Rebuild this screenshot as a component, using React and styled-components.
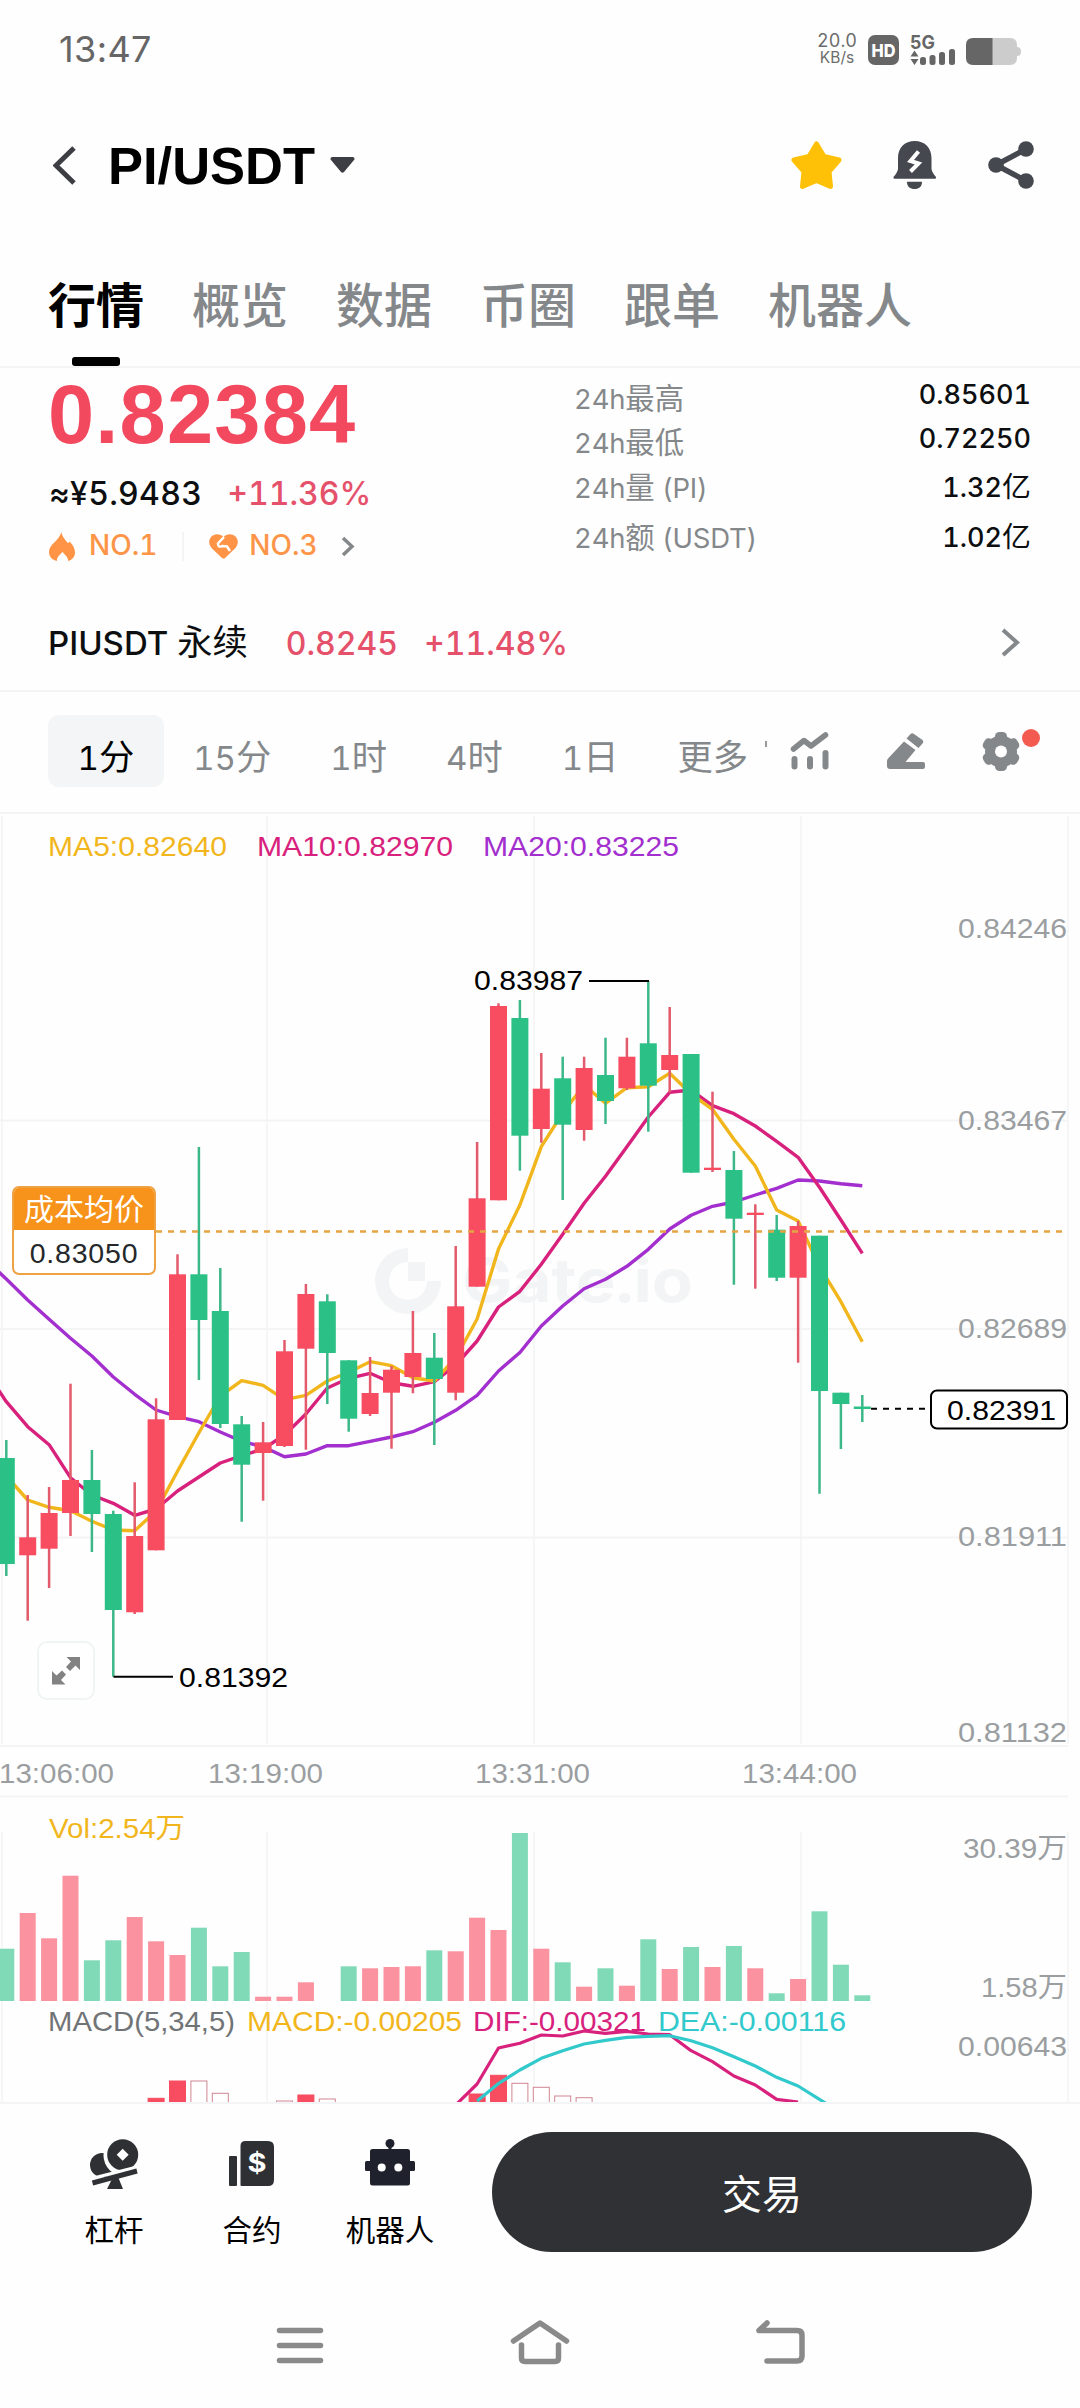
import React, { Fragment } from 'react'
import styled, { createGlobalStyle } from 'styled-components'

const UP = '#f84c60'
const DOWN = '#2bc186'
const INK = '#0c0e10'
const MUTED = '#85888b'
const AXIS = '#9b9ea1'
const LINE = '#f3f4f5'
const YELLOW = '#f2b61d'
const PINK = '#d8217c'
const PURPLE = '#a22fce'
const CYAN = '#31c9cb'
const FONT = 'Inter, "Noto Sans CJK SC", sans-serif'
const NUMERIC = '"Liberation Sans", "Noto Sans CJK SC", sans-serif'

const GlobalStyle = createGlobalStyle`
  body {
    margin: 0;
    background: #fefefe;
    font-family: ${FONT};
    font-variant-numeric: tabular-nums;
    color: ${INK};
  }
`

const Screen = styled.div`
  width: 1080px;
  height: 2408px;
  display: flex;
  flex-direction: column;
  overflow: hidden;
  white-space: nowrap;
`

const Label = styled.span`
  font-size: ${props => props.$size}px;
  line-height: 1.2;
  font-weight: ${props => props.$weight || 400};
  letter-spacing: ${props => props.$track || 0}px;
  color: ${props => props.$color || INK};
`

// Han glyphs are set slightly larger than the latin text beside them
const Han = styled.span`
  font-size: 1.07em;
  font-weight: 400;
  line-height: 0;
  letter-spacing: 0;
`

/* status bar */

const StatusBar = styled.div`
  height: 98px;
  display: flex;
  justify-content: space-between;
  align-items: center;
  padding: 0 56px 0 59px;
  box-sizing: border-box;
`

const Clock = styled.span`
  font-size: 36px;
  font-variant-numeric: normal;
  letter-spacing: 0.4px;
  color: #666;
`

const StatusIcons = styled.div`
  display: flex;
  align-items: center;
  padding: 0 3px 3px 0;
`

const NetSpeed = styled.div`
  display: flex;
  flex-direction: column;
  align-items: center;
  width: 38px;
  margin: 3px 12px 0 0;
  font-size: 18px;
  line-height: 17px;
  color: #6c6c6c;

  span:last-child {
    font-size: 15.5px;
  }
`

/* header */

const Header = styled.div`
  height: 136px;
  display: flex;
  align-items: center;
  padding: 0 46px 2px 53px;
  box-sizing: border-box;
`

const Title = styled.h1`
  margin: 0 15px 0 31px;
  font-family: ${NUMERIC};
  font-size: 52.5px;
  font-weight: 700;
  color: #000;
`

const HeaderIcons = styled.div`
  display: flex;
  gap: 51px;
  margin-left: auto;
`

const Tabs = styled.div`
  height: 134px;
  display: flex;
  gap: 48px;
  padding: 0 48px;
  box-sizing: border-box;
  border-bottom: 2px solid ${LINE};
`

const Tab = styled.div`
  display: flex;
  flex-direction: column;
  align-items: center;
  justify-content: flex-end;
  font-size: 48px;
  line-height: 70px;
  font-weight: ${props => props.$active ? 700 : 500};
  color: ${props => props.$active ? '#000' : MUTED};

  &::after {
    content: '';
    width: 48px;
    height: 9px;
    margin-top: 16px;
    border-radius: 3px;
    background: ${props => props.$active ? '#000' : 'transparent'};
  }
`

/* ticker */

const Ticker = styled.div`
  height: 230px;
  display: flex;
  justify-content: space-between;
  padding: 0 49px 0 49px;
  box-sizing: border-box;
`

const Price = styled.div`
  height: 91px;
  margin-left: -1px;
  line-height: 94px;
  font-family: ${NUMERIC};
  font-size: 83px;
  font-weight: 700;
  letter-spacing: 1.2px;
  color: #f2495f;
`

const PriceSub = styled.div`
  height: 70px;
  display: flex;
  align-items: center;
  gap: 25px;
`

const Ranks = styled.div`
  height: 34px;
  display: flex;
  align-items: center;
`

const Divider = styled.i`
  width: 2px;
  height: 29px;
  margin: 0 25px 0 25px;
  background: ${LINE};
`

const Stats = styled.div`
  width: 457px;
  padding-top: 9px;
  display: grid;
  grid-template-rows: 44px 44px 46px 54px;
`

const Stat = styled.div`
  display: flex;
  justify-content: space-between;
  align-items: center;
`

const StatValue = styled(Label)`
  padding-bottom: ${props => props.$raised ? 7 : 0}px;
`

const Perp = styled.div`
  height: 94px;
  display: flex;
  align-items: center;
  padding: 0 60px 0 48px;
  box-sizing: border-box;
  border-bottom: 2px solid ${LINE};

  svg {
    margin: 0 0 3px auto;
  }
`

/* interval bar */

const Toolbar = styled.div`
  height: 122px;
  display: flex;
  align-items: center;
  padding: 0 40px 2px 48px;
  box-sizing: border-box;
  border-bottom: 2px solid ${LINE};
`

const Interval = styled.div`
  height: 72px;
  padding: 10px ${props => props.$last ? 17 : 29.5}px 0 29.5px;
  box-sizing: border-box;
  line-height: 66px;
  border-radius: 11px;
  font-size: 33px;
  color: ${props => props.$active ? '#000' : MUTED};
  background: ${props => props.$active ? '#f3f5f6' : 'transparent'};
`

const Tick = styled.i`
  width: 2px;
  height: 6px;
  margin-bottom: 14px;
  background: #999;
`

const Tools = styled.div`
  display: flex;
  align-items: center;
  margin-left: auto;
  gap: 57px;
`

const ToolWithDot = styled.div`
  position: relative;
  display: flex;
  padding-right: 20px;
`

const Dot = styled.i`
  position: absolute;
  top: -3px;
  right: 0;
  width: 18px;
  height: 18px;
  border-radius: 50%;
  background: #f35b50;
`

/* chart */

const ChartArea = styled.div`
  position: relative;
  height: 1288px;

  > svg {
    display: block;
  }
`

const ExpandButton = styled.button`
  position: absolute;
  left: 37px;
  top: 827px;
  width: 58px;
  height: 59px;
  padding: 0;
  display: flex;
  align-items: center;
  justify-content: center;
  border: 2px solid #f1f4f5;
  border-radius: 10px;
  background: #fff;
`

const CostTag = styled.div`
  position: absolute;
  left: 12px;
  top: 372px;
  width: 144px;
  height: 89px;
  box-sizing: border-box;
  border: 2px solid #efa244;
  border-radius: 7px;
  background: #fff;
  overflow: hidden;
  text-align: center;
`

const CostHead = styled.div`
  height: 42px;
  line-height: 42px;
  background: #f7931a;
  color: #fff;
  font-size: 30px;
`

const CostValue = styled.div`
  line-height: 47px;
  font-family: ${NUMERIC};
  font-size: 28.5px;
  letter-spacing: 0.8px;
  color: #25282b;
`

/* footer */

const Footer = styled.div`
  height: 188px;
  display: flex;
  padding: 28px 48px 0 45px;
  box-sizing: border-box;
  border-top: 2px solid ${LINE};
`

const Action = styled.div`
  width: 138px;
  display: flex;
  flex-direction: column;
  align-items: center;
  padding-top: 7px;
  box-sizing: border-box;
  font-size: 29.5px;
  line-height: 44px;
  color: #000;

  svg {
    height: 52px;
    margin-bottom: 17px;
  }
`

const TradeButton = styled.button`
  width: 540px;
  height: 120px;
  margin-left: auto;
  padding: 0;
  border: 0;
  border-radius: 60px;
  background: #303134;
  color: #fff;
  font: 400 40px ${FONT};
`

const NavBar = styled.div`
  height: 118px;
  display: flex;
  justify-content: center;
  gap: 180px;
  padding-top: 28px;
  box-sizing: border-box;
`

// [rising, high, top, bottom, low, volume top] in chart pixels
const CANDLES = [
  [0, 1440, 1458, 1564, 1576, 1948.7],
  [1, 1495, 1537.3, 1555.3, 1620.7, 1913],
  [1, 1487, 1513, 1548.7, 1588, 1938.3],
  [1, 1383.7, 1480, 1513, 1536, 1875.7],
  [0, 1450, 1480, 1514, 1552, 1960.3],
  [0, 1510.7, 1514, 1610, 1676.7, 1940.3],
  [1, 1482.3, 1536, 1612.3, 1614, 1917],
  [1, 1398.3, 1419.3, 1550.3, 1550.3, 1941.3],
  [1, 1254.3, 1274.3, 1420, 1420, 1955],
  [0, 1147, 1274.3, 1320, 1380, 1927.7],
  [0, 1268, 1311, 1424, 1428, 1966.3],
  [0, 1416, 1424.3, 1464.7, 1521.7, 1952],
  [1, 1422, 1442.3, 1453, 1500.7, 1996.7],
  [1, 1340, 1351.3, 1446, 1447, 1996.7],
  [1, 1284, 1294, 1348.7, 1449.7, 1982.3],
  [0, 1294.3, 1301.3, 1353, 1404, 2001],
  [0, 1360.3, 1360.3, 1418.7, 1431.7, 1966.3],
  [1, 1357, 1393, 1414, 1416, 1968.3],
  [1, 1366, 1369.7, 1392.7, 1448.7, 1967],
  [1, 1311, 1353, 1377, 1393.3, 1966.3],
  [0, 1333, 1357.7, 1379, 1445, 1950.3],
  [1, 1246, 1306.3, 1392.7, 1400.3, 1951.3],
  [1, 1142, 1198.3, 1286.7, 1286.7, 1917.7],
  [1, 1003.3, 1006, 1200.3, 1200.3, 1930],
  [0, 1000, 1018, 1135.7, 1170.7, 1833],
  [1, 1053, 1088.7, 1129, 1142.7, 1948.7],
  [0, 1056.7, 1078.3, 1124.7, 1200, 1962.3],
  [1, 1056.7, 1068, 1130, 1140.7, 1986.7],
  [0, 1037.7, 1075, 1101, 1124, 1968.3],
  [1, 1037.7, 1056.7, 1088.3, 1090, 1985.7],
  [0, 981, 1043.3, 1085.7, 1131.7, 1939.3],
  [1, 1007, 1055, 1070, 1092.7, 1969],
  [0, 1054, 1054, 1172.7, 1172.7, 1947],
  [1, 1091.7, 1167.7, 1170, 1172, 1967],
  [0, 1151, 1170, 1218.7, 1284.7, 1946],
  [1, 1204.3, 1212.7, 1215, 1288.7, 1968.3],
  [0, 1215, 1229.7, 1277.7, 1281, 1993.3],
  [1, 1221, 1226, 1277.7, 1362.7, 1979],
  [0, 1235.7, 1235.7, 1391, 1493.7, 1911.3],
  [0, 1392.7, 1392.7, 1404, 1449, 1964.7],
  [0, 1395, 1406.5, 1409, 1422, 1995.3],
]

const MA5 = [
  1476, 1500, 1507.3, 1510.7, 1521.3, 1530, 1530.7, 1511, 1471.3, 1432.7, 1396, 1380.7, 1385.3, 1399.7,
  1395.3, 1381, 1372.3, 1361.7, 1365.7, 1377.7, 1381, 1358, 1319, 1249, 1205, 1146.7, 1113, 1085, 1103.3,
  1087.7, 1086.7, 1073.3, 1094, 1109.3, 1139.3, 1166, 1210, 1221, 1266.5, 1301.7, 1341.7,
]

const MA10 = [
  1401.7, 1426.7, 1444.7, 1477.7, 1495, 1503.3, 1515.3, 1509, 1491, 1477, 1463, 1455.7, 1449, 1435,
  1414, 1388, 1378.3, 1373.3, 1382.7, 1386.3, 1381.7, 1365, 1341, 1307, 1291.3, 1264.3, 1234.3, 1203.3,
  1176.3, 1146.7, 1117, 1092.3, 1090, 1105.7, 1113.7, 1126, 1141.3, 1157.3, 1187.3, 1220, 1253.3,
]

const MA20 = [
  1279, 1300, 1319.3, 1338.3, 1356, 1377, 1394.3, 1410, 1416.7, 1421.7, 1432, 1441.3, 1446.7, 1456.7,
  1454, 1445.7, 1445.7, 1441.3, 1437, 1431.7, 1422.3, 1410.3, 1395.3, 1371, 1352.5, 1326, 1306, 1288.7,
  1279.3, 1266.3, 1249.3, 1229, 1215.3, 1206.3, 1202, 1195, 1188.3, 1180, 1181, 1183.7, 1185.7,
]

const DIF = [
  2105, 2084, 2048, 2043.3, 2035, 2036, 2031, 2033.3, 2031.3, 2034, 2034.7, 2050.7, 2061.7, 2076,
  2085, 2099.3, 2102,
]

const DEA = [
  2101, 2083.5, 2070, 2058.3, 2050.7, 2044, 2040.3, 2037.3, 2036.3, 2035.7, 2040.7, 2047.7, 2056.7,
  2066, 2077.3, 2086, 2099.3, 2113,
]

// [candle index, top, filled]
const MACD_BARS = [
  [7, 2098.3, 1], [8, 2081, 1], [9, 2081, 0], [10, 2093.3, 0], [13, 2101, 0], [14, 2095, 1],
  [15, 2099, 0], [22, 2094, 1], [23, 2075.3, 1], [24, 2083.3, 0], [25, 2087.3, 0], [26, 2096, 0],
  [27, 2097.7, 0],
]

// [text, x, baseline, width, colour]
const CHART_TEXT = [
  ['MA5:0.82640', 48, 856, 179, YELLOW],
  ['MA10:0.82970', 257, 856, 196, PINK],
  ['MA20:0.83225', 483, 856, 196, PURPLE],
  ['0.84246', 958, 937.5, 109, AXIS],
  ['0.83467', 958, 1129.5, 109, AXIS],
  ['0.82689', 958, 1337.5, 109, AXIS],
  ['0.81911', 958, 1546, 109, AXIS],
  ['0.81132', 958, 1742, 109, AXIS],
  ['13:06:00', -1, 1783, 115, AXIS],
  ['13:19:00', 208, 1783, 115, AXIS],
  ['13:31:00', 475, 1783, 115, AXIS],
  ['13:44:00', 742, 1783, 115, AXIS],
  ['Vol:2.54万', 49, 1838, 136, YELLOW],
  ['30.39万', 963, 1858, 104, AXIS],
  ['1.58万', 981, 1997, 86, AXIS],
  ['0.00643', 958, 2056, 109, AXIS],
  ['MACD(5,34,5)', 48, 2031, 187, '#717476'],
  ['MACD:-0.00205', 247, 2031, 215, YELLOW],
  ['DIF:-0.00321', 473, 2031, 173, PINK],
  ['DEA:-0.00116', 658, 2031, 188, CYAN],
  ['0.83987', 474, 990, 109, '#000'],
  ['0.81392', 179, 1687, 109, '#000'],
  ['0.82391', 947, 1420, 109, '#000'],
]

const cx = i => 6.3 + 21.4 * i
const points = (values, start = 0) => values.map((y, i) => `${cx(i + start)},${y}`).join(' ')

const MarketChart = () => (
  <svg width="1080" height="1288" viewBox="0 814 1080 1288" fontFamily={NUMERIC}>
    <g stroke={LINE} strokeWidth="2">
      {[2, 267, 534, 801, 1068].map(x => (
        <path key={x} d={`M${x} 816V1744M${x} 1832V2102`} strokeWidth="1.5" />
      ))}
      <path d="M0 1120.5H1068M0 1329H1068M0 1537.5H1068M0 1746H1068M0 1796.5H1068" />
    </g>

    <g fill="#f2f4f5">
      <path d="M408 1248A33 33 0 1 0 441 1281H427A19 19 0 1 1 408 1262Z" />
      <path d="M408 1262h17v19h-17z" />
      <text
        x="462"
        y="1302"
        fontFamily="Inter"
        fontSize="60"
        fontWeight="700"
        textLength="231"
        lengthAdjust="spacingAndGlyphs"
      >
        Gate.io
      </text>
    </g>

    <g fill="none" strokeWidth="3.4" strokeLinejoin="round">
      <polyline points={`-15,1259 ${points(MA20)}`} stroke={PURPLE} />
      <polyline points={`-15,1370 ${points(MA10)}`} stroke={PINK} />
      <polyline points={points(MA5)} stroke={YELLOW} />
    </g>

    {CANDLES.map(([rising, high, top, bottom, low, vol], i) => (
      <Fragment key={i}>
        <path d={`M${cx(i)} ${high}V${low}`} stroke={rising ? '#e25a6b' : '#3cb788'} strokeWidth="2.5" />
        <rect x={cx(i) - 8.5} y={top} width="17" height={bottom - top} fill={rising ? UP : DOWN} />
        <rect x={cx(i) - 8} y={vol} width="16" height={2001 - vol} fill={rising ? '#fa929f' : '#81dab7'} />
      </Fragment>
    ))}

    <path d="M156 1231.500H1064" stroke="#e5a544" strokeWidth="2.4" strokeDasharray="6 6" />
    <path d="M589 981H649M113.5 1676.7H173" stroke="#000" strokeWidth="2" />

    <path d="M871 1408.7H929" stroke="#000" strokeWidth="2" strokeDasharray="6 6" />
    <rect x="931" y="1390.5" width="136" height="38" rx="6" fill="#fff" stroke="#000" strokeWidth="2" />

    {MACD_BARS.map(([i, top, filled]) => (
      <rect
        key={i}
        x={cx(i) - 8}
        y={top}
        width="16"
        height="30"
        fill={filled ? UP : '#fff'}
        stroke={filled ? UP : '#cf8591'}
        strokeWidth="1"
      />
    ))}
    <g fill="none" strokeWidth="3.2" strokeLinejoin="round">
      <polyline points={points(DIF, 21)} stroke={PINK} />
      <polyline points={points(DEA, 22)} stroke={CYAN} />
    </g>

    {CHART_TEXT.map(([text, x, y, width, fill]) => (
      <text key={text} x={x} y={y} fontSize="28" textLength={width} lengthAdjust="spacingAndGlyphs" fill={fill}>
        {text}
      </text>
    ))}
  </svg>
)

/* icons */

const Chevron = ({ width, height, left, color = MUTED, stroke = 3.5 }) => (
  <svg width={width} height={height} viewBox={`0 0 ${width} ${height}`}>
    <path
      d={left
        ? `M${width - 3} 2L3 ${height / 2}L${width - 3} ${height - 2}`
        : `M3 2L${width - 3} ${height / 2}L3 ${height - 2}`}
      fill="none"
      stroke={color}
      strokeWidth={stroke}
    />
  </svg>
)

const StatusGlyphs = () => (
  <svg width="153" height="34" viewBox="0 -4 153 34">
    <rect width="31" height="30" rx="7" fill="#666" />
    <text x="3.5" y="21.5" fontFamily="Inter" fontSize="18" fontWeight="800" fill="#fff" textLength="24" lengthAdjust="spacingAndGlyphs">HD</text>
    <text x="42" y="14" fontFamily="Inter" fontSize="19" fontWeight="700" fill="#666" textLength="25" lengthAdjust="spacingAndGlyphs">5G</text>
    <path d="M42.5 21.5L46.5 15.5L50.5 21.5ZM42.5 24L46.5 30L50.5 24Z" fill="#666" />
    <g fill="#666">
      <rect x="52" y="22" width="6" height="8" rx="2.5" />
      <rect x="61.5" y="20" width="6" height="10" rx="2.5" />
      <rect x="71" y="17" width="6" height="13" rx="2.5" />
      <rect x="81" y="14" width="6" height="16" rx="2.5" />
    </g>
    <path d="M124 3H142Q149 3 149 10V12Q153 12 153 16.5T149 21V23Q149 30 142 30H124Z" fill="#ccc" />
    <path d="M124.500 3H105Q98 3 98 10V23Q98 30 105 30H124.500Z" fill="#666" />
  </svg>
)

const StarIcon = () => (
  <svg width="51" height="48" viewBox="0 0 51 48">
    <path
      d="M25.500 3L33 15.500L48 19L38 30.500L39.500 45.500L25.500 39.500L11.500 45.500L13 30.500L3 19L18 15.500Z"
      fill="#ffc107"
      stroke="#ffc107"
      strokeWidth="5"
      strokeLinejoin="round"
    />
  </svg>
)

const BellIcon = () => (
  <svg width="44" height="48" viewBox="0 0 44 48" fill="#464850">
    <path d="M5 17C5 6.500 12 0 21.700 0S38.500 6.500 38.500 17V28Q39 31.500 43 36Q43.500 37.700 42 37.700H1.500Q0 37.700 .5 36Q4.500 31.500 5 28Z" />
    <path d="M14 40.700H29C29 45.500 26 48 21.500 48S14 45.500 14 40.700Z" />
    <path d="M25.500 10.500L17.500 20L25.500 22.500L17.500 30.500" fill="none" stroke="#fff" strokeWidth="4" />
  </svg>
)

const ShareIcon = () => (
  <svg width="46" height="48" viewBox="0 0 46 48" fill="#464850">
    <path d="M38 8L8 24L38 40" fill="none" stroke="#464850" strokeWidth="5.500" />
    <circle cx="38" cy="8" r="7.800" />
    <circle cx="8" cy="24" r="7.800" />
    <circle cx="38" cy="40" r="7.800" />
  </svg>
)

const FlameIcon = () => (
  <svg width="26" height="29" viewBox="0 0 26 29">
    <path
      d="M12.500 0C13 5 16 7 18 10C19 11.500 20 11 20.500 9.500C24 12.500 26 17 26 20.500C26 25 23 28 19 29C19.500 25.500 16 23 13.500 20C10.500 23 7.500 25.500 8 29C3 28 0 24.500 0 20C0 12 10 9 12.500 0Z"
      fill="#ff9446"
    />
  </svg>
)

const HeartIcon = () => (
  <svg width="29" height="25" viewBox="0 0 29 25">
    <path
      d="M14.500 3C18 -1 24 -.5 27 3C30 7 29 11 26 14.500L16 24Q14.500 25 13 24L3 14.500C0 11 -1 7 2 3C5 -.5 11 -1 14.500 3Z"
      fill="#ff9446"
    />
    <path d="M15 3L9 9.500Q9 14 13.500 12L18 12.500L21 17" fill="none" stroke="#fff" strokeWidth="2.500" />
  </svg>
)

const IndicatorIcon = () => (
  <svg width="40" height="38" viewBox="0 0 40 38" fill="none" stroke={MUTED} strokeWidth="6" strokeLinecap="round">
    <path d="M3.500 17L14 8.500L21 14L35.500 3" strokeWidth="5.500" strokeLinejoin="round" />
    <path d="M4.500 27V34.500M20 27V34.500M35.500 21V34.500" />
  </svg>
)

const PencilIcon = () => (
  <svg width="38" height="36" viewBox="0 0 38 36" fill={MUTED}>
    <path d="M17 8.500L28.500 17L18.500 29H36Q38 29 38 31V34Q38 36 36 36H3Q0 36 0 33V28Q0 26.500 1 25.500Z" />
    <path d="M19.500 5.500L23.500 1Q25 -.5 27 1L35.500 7Q37 8.500 35.500 10.500L31.500 15Z" />
  </svg>
)

const GearIcon = () => (
  <svg width="38" height="39" viewBox="-19 -19.500 38 39" fill={MUTED}>
    <circle r="16" />
    {[0, 60, 120].map(a => (
      <rect key={a} x="-6" y="-19.500" width="12" height="39" rx="4.500" transform={`rotate(${a})`} />
    ))}
    <circle r="6" fill="#fff" />
  </svg>
)

const ExpandIcon = () => (
  <svg width="28" height="29" viewBox="0 0 28 29" fill="#828282">
    <path d="M14.500 1H28V14L23.500 9.500L18 15L14 11L19 5.500Z" />
    <path d="M0 15L4.500 19.500L10 14.500L14 18.500L9 24L13.500 28.500H0Z" />
  </svg>
)

const LeverageIcon = () => (
  <svg width="49" height="52" viewBox="0 0 49 52" fill="#2e3033">
    <circle cx="12" cy="26" r="12" />
    <circle cx="34" cy="16.500" r="20.500" fill="#fefefe" />
    <circle cx="32.700" cy="15.700" r="15.500" />
    <path d="M32.700 9.700L38.700 15.700L32.700 21.700L26.700 15.700Z" fill="#fff" />
    <path d="M1.500 39.500L47 28" stroke="#fefefe" strokeWidth="3" />
    <path d="M2.500 44L47 32" stroke="#2e3033" strokeWidth="5" />
    <path d="M21.500 41L28.500 39L33 50H17Z" />
  </svg>
)

const ContractIcon = () => (
  <svg width="46" height="52" viewBox="0 0 46 52" fill="#2e3033">
    <rect y="17" width="8" height="30" rx="1" />
    <path d="M11.500 7Q11.500 2 16.500 2H39Q45 2 45 8V41Q45 47 39 47H12.500Q11.500 47 11.500 46Z" />
    <text x="18.500" y="33" fontFamily="Inter" fontSize="26" fontWeight="700" fill="#fff" textLength="19" lengthAdjust="spacingAndGlyphs">$</text>
  </svg>
)

const RobotIcon = () => (
  <svg width="50" height="52" viewBox="0 0 50 52" fill="#1f222d">
    <circle cx="25" cy="4.500" r="4.500" />
    <path d="M23.500 6h3v6h-3z" />
    <rect x="5" y="10" width="40" height="36.500" rx="2.500" />
    <rect y="22" width="50" height="10" rx="1.500" />
    <circle cx="16.700" cy="28.500" r="4" fill="#fff" />
    <circle cx="33.300" cy="28.500" r="4" fill="#fff" />
  </svg>
)

const NavIcon = ({ d }) => (
  <svg width="60" height="50" viewBox="0 0 60 50">
    <path d={d} fill="none" stroke="#8a8a8a" strokeWidth="5.500" strokeLinecap="round" strokeLinejoin="round" />
  </svg>
)

const TABS = ['行情', '概览', '数据', '币圈', '跟单', '机器人']

const INTERVALS = [['1', '分'], ['15', '分'], ['1', '时'], ['4', '时'], ['1', '日'], ['', '更多']]

const STATS = [
  ['24h', '最高', '', '0.85601', ''],
  ['24h', '最低', '', '0.72250', ''],
  ['24h', '量', ' (PI)', '1.32', '亿'],
  ['24h', '额', ' (USDT)', '1.02', '亿'],
]

const App = () => (
  <Screen>
    <GlobalStyle />
    <StatusBar>
      <Clock>13:47</Clock>
      <StatusIcons>
        <NetSpeed>
          <span>20.0</span>
          <span>KB/s</span>
        </NetSpeed>
        <StatusGlyphs />
      </StatusIcons>
    </StatusBar>

    <Header>
      <Chevron left width={24} height={39} color="#3c3e44" stroke={5} />
      <Title>PI/USDT</Title>
      <svg width="25" height="16" viewBox="0 0 25 16">
        <path d="M2 0H23Q25.500 1 24 3L14 15Q12.500 16.500 11 15L1 3Q-.5 1 2 0Z" fill="#3c3e44" />
      </svg>
      <HeaderIcons>
        <StarIcon />
        <BellIcon />
        <ShareIcon />
      </HeaderIcons>
    </Header>

    <Tabs>
      {TABS.map((tab, i) => <Tab key={tab} $active={i === 0}>{tab}</Tab>)}
    </Tabs>

    <Ticker>
      <div>
        <Price>0.82384</Price>
        <PriceSub>
          <Label $size={32} $weight={500} $track={0.3}>≈¥5.9483</Label>
          <Label $size={32} $weight={500} $color="#e5506a">+11.36%</Label>
        </PriceSub>
        <Ranks>
          <FlameIcon />
          <Label $size={28} $weight={500} $color="#fd9549" style={{ marginLeft: 14 }}>NO.1</Label>
          <Divider />
          <HeartIcon />
          <Label $size={28} $weight={500} $color="#fd9549" style={{ marginLeft: 11, marginRight: 22 }}>NO.3</Label>
          <Chevron width={15} height={21} />
        </Ranks>
      </div>
      <Stats>
        {STATS.map(([prefix, han, unit, value, suffix], i) => (
          <Stat key={han}>
            <Label $size={27.5} $track={-0.2} $color={MUTED}>{prefix}<Han>{han}</Han>{unit}</Label>
            <StatValue $size={27} $weight={500} $raised={i < 2}>{value}<Han>{suffix}</Han></StatValue>
          </Stat>
        ))}
      </Stats>
    </Ticker>

    <Perp>
      <Label $size={33} $weight={500} style={{ marginRight: 38 }}>PIUSDT <Han>永续</Han></Label>
      <Label $size={32} $weight={500} $color="#e5506a" style={{ marginRight: 26 }}>0.8245</Label>
      <Label $size={32} $weight={500} $color="#e5506a">+11.48%</Label>
      <Chevron width={20} height={29} stroke={4} />
    </Perp>

    <Toolbar>
      {INTERVALS.map(([count, unit], i) => (
        <Interval key={count + unit} $active={i === 0} $last={i === 5}>{count}<Han>{unit}</Han></Interval>
      ))}
      <Tick />
      <Tools>
        <IndicatorIcon />
        <PencilIcon />
        <ToolWithDot>
          <GearIcon />
          <Dot />
        </ToolWithDot>
      </Tools>
    </Toolbar>

    <ChartArea>
      <MarketChart />
      <CostTag>
        <CostHead>成本均价</CostHead>
        <CostValue>0.83050</CostValue>
      </CostTag>
      <ExpandButton><ExpandIcon /></ExpandButton>
    </ChartArea>

    <Footer>
      <Action><LeverageIcon />杠杆</Action>
      <Action><ContractIcon />合约</Action>
      <Action><RobotIcon />机器人</Action>
      <TradeButton>交易</TradeButton>
    </Footer>

    <NavBar>
      <NavIcon d="M9.500 12.500H50.500M9.500 27.500H50.500M9.500 42.500H50.500" />
      <NavIcon d="M3.500 23L30 5L56.500 23M11.500 27V40Q11.500 43.500 15 43.500H45Q48.500 43.500 48.500 40V27" />
      <NavIcon d="M17 5L9 12.500H47Q52 12.500 52 17V38Q52 43 47 43H17" />
    </NavBar>
  </Screen>
)

export default App
